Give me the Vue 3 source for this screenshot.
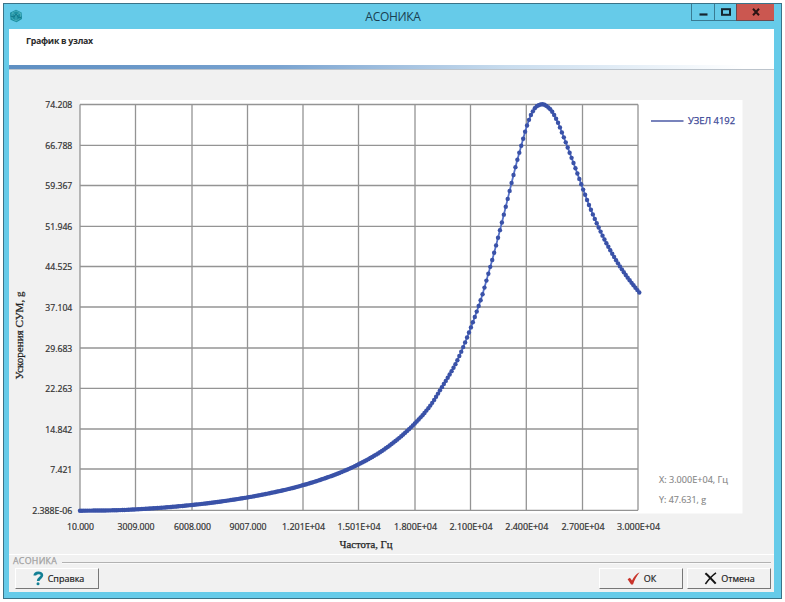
<script setup>
const xTicks = [
  { x: 80, label: '10.000', w: 27 },
  { x: 135.5, label: '3009.000', w: 37 },
  { x: 192, label: '6008.000', w: 37 },
  { x: 247.5, label: '9007.000', w: 37 },
  { x: 303, label: '1.201E+04', w: 43 },
  { x: 358.5, label: '1.501E+04', w: 43 },
  { x: 415, label: '1.800E+04', w: 43 },
  { x: 470.5, label: '2.100E+04', w: 43 },
  { x: 526.3, label: '2.400E+04', w: 43 },
  { x: 582.5, label: '2.700E+04', w: 43 },
  { x: 638, label: '3.000E+04', w: 43 },
]
const yTicks = [
  { y: 104.5, label: '74.208', w: 27 },
  { y: 145.3, label: '66.788', w: 27 },
  { y: 185.5, label: '59.367', w: 27 },
  { y: 226.3, label: '51.946', w: 27 },
  { y: 266.5, label: '44.525', w: 27 },
  { y: 307, label: '37.104', w: 27 },
  { y: 348, label: '29.683', w: 27 },
  { y: 388.3, label: '22.263', w: 27 },
  { y: 429, label: '14.842', w: 27 },
  { y: 469, label: '7.421', w: 22 },
  { y: 510.3, label: '2.388E-06', w: 40 },
]

const samples = [
  [80, 510.7], [114, 510.3], [135, 509.4], [163, 507.6], [192, 505], [220, 501.6],
  [247, 497.5], [280, 491], [303, 485.2], [330, 476.5], [345, 470.6], [360, 463.6],
  [380, 452.2], [396.7, 440], [415, 423.3], [430, 406], [441.7, 387.5], [455, 365],
  [460, 354.5], [465, 342.7], [470.7, 328], [476.7, 311.7], [482.3, 295], [487.7, 276],
  [493.7, 254.5], [501, 226], [506.7, 203], [510.7, 186.5], [516, 165], [522, 143],
  [526.7, 126.5], [531.7, 113.5], [536.7, 106.3], [542.5, 104.3], [550, 109], [556.7, 120],
  [563.3, 136], [569, 151], [576.7, 171.7], [582.7, 188.3], [590, 207.5], [598.3, 226.7],
  [606.7, 243.8], [620, 266.5], [630, 280.8], [639.3, 292.5],
]

// Monotone cubic interpolation between the samples
const n = samples.length
const d = []
for (let i = 0; i < n - 1; i++) {
  d.push((samples[i + 1][1] - samples[i][1]) / (samples[i + 1][0] - samples[i][0]))
}
const m = samples.map((_, i) => {
  if (i === 0) return d[0]
  if (i === n - 1) return d[n - 2]
  return d[i - 1] * d[i] <= 0 ? 0 : (2 * d[i - 1] * d[i]) / (d[i - 1] + d[i])
})
function valueAt(x) {
  let i = 0
  while (i < n - 2 && x > samples[i + 1][0]) i++
  const [x0, y0] = samples[i]
  const [x1, y1] = samples[i + 1]
  const h = x1 - x0
  const t = (x - x0) / h
  const t2 = t * t
  const t3 = t2 * t
  return (2 * t3 - 3 * t2 + 1) * y0 + (t3 - 2 * t2 + t) * h * m[i] +
    (3 * t2 - 2 * t3) * y1 + (t3 - t2) * h * m[i + 1]
}
const COUNT = 290
const points = Array.from({ length: COUNT }, (_, i) => {
  const x = 80 + (559.3 * i) / (COUNT - 1)
  return { x: +x.toFixed(2), y: +valueAt(x).toFixed(2) }
})
const line = points.map((p) => `${p.x},${p.y}`).join(' ')
</script>

<template>
  <div class="desktop">
    <div class="window">
      <header class="titlebar">
        <svg class="app-icon" width="14" height="14" viewBox="0 0 14 14">
          <path d="M7 .8 12.6 3.6 13 10 7.5 13.3 1.5 10.8 1 3.8Z" fill="#1c8fa2" />
          <path d="M3 4 7 6 11.5 4M7 6v6M3 4v5.5l4 2.5 4.5-3V4L7 2Z" fill="none" stroke="#4fb2bd" stroke-width=".8" />
          <path d="M1.5 7 5 8 7 5l3 4 2.5-1" fill="none" stroke="#13788a" stroke-width="1" />
        </svg>
        <h1 class="title">АСОНИКА</h1>
        <div class="controls">
          <span class="ctl min"><svg width="9" height="9" viewBox="0 0 9 9"><path d="M.5 6.5h8" stroke="#16262f" stroke-width="2.2" /></svg></span>
          <span class="ctl max"><svg width="10" height="8" viewBox="0 0 10 8"><rect x="1" y="1.2" width="8" height="5.6" fill="none" stroke="#16262f" stroke-width="2" /></svg></span>
          <span class="ctl close"><svg width="8" height="8" viewBox="0 0 8 8"><path d="M1 .8 7 7.2M7 .8 1 7.2" stroke="#2c1414" stroke-width="2" /></svg></span>
        </div>
      </header>

      <main class="client">
        <div class="banner"><h2>График в узлах</h2></div>
        <div class="rule"></div>

        <svg class="chart" width="765" height="484" viewBox="9 70 765 484">
          <rect x="80" y="100" width="662.5" height="413.5" fill="#fff" />
          <g stroke="#949494" stroke-width="1.3">
            <line v-for="t in xTicks" :key="t.label" :x1="t.x" :x2="t.x" y1="104.5" y2="510.3" />
            <line v-for="t in yTicks" :key="t.label" x1="80" x2="638" :y1="t.y" :y2="t.y" />
          </g>
          <polyline :points="line" fill="none" stroke="#5470c8" stroke-width="1.8" />
          <g fill="#3a52a8">
            <circle v-for="(p, i) in points" :key="i" :cx="p.x" :cy="p.y" r="2.2" />
          </g>
          <g class="tick">
            <text v-for="t in yTicks" :key="t.label" :x="72.3 - t.w" :y="t.y + 3.9" :textLength="t.w" lengthAdjust="spacingAndGlyphs">{{ t.label }}</text>
            <text v-for="t in xTicks" :key="t.label" :x="t.x + 0.5 - t.w / 2" y="530" :textLength="t.w" lengthAdjust="spacingAndGlyphs">{{ t.label }}</text>
          </g>
          <text class="axis" x="339.5" y="548" textLength="53" lengthAdjust="spacingAndGlyphs">Частота, Гц</text>
          <text class="axis" transform="translate(23 379.5) rotate(-90)" textLength="88" lengthAdjust="spacingAndGlyphs">Ускорения СУМ, g</text>
          <line x1="651" x2="683.5" y1="121" y2="121" stroke="#4b5aa6" stroke-width="1.7" />
          <text class="legend" x="688" y="124" textLength="47" lengthAdjust="spacingAndGlyphs">УЗЕЛ 4192</text>
          <text class="coord" x="659" y="482.5" textLength="69" lengthAdjust="spacingAndGlyphs">X: 3.000E+04, Гц</text>
          <text class="coord" x="659" y="503" textLength="47" lengthAdjust="spacingAndGlyphs">Y: 47.631, g</text>
        </svg>

        <footer class="footer">
          <div class="group"><span class="group-name">АСОНИКА</span><i class="group-line"></i></div>
          <div class="buttons">
            <button class="btn help">
              <svg width="11" height="15" viewBox="0 0 11 15">
                <path d="M1.8 4.6C1.8 1.2 8.9.8 8.9 4.3 8.9 6.8 5.3 6.9 5.2 10" fill="none" stroke="#137f94" stroke-width="2.7" />
                <circle cx="5" cy="12.8" r="1.5" fill="#137f94" />
              </svg>
              <span class="help-text">Справка</span>
            </button>
            <button class="btn ok">
              <svg width="13" height="13" viewBox="0 0 13 13">
                <path d="M.6 7.2 2.9 5.8 5 8.6C6.7 5.1 8.9 2.2 12.6.3 9.6 4.2 7.4 8.3 6 12.4H4.1Z" fill="#c9342b" />
              </svg>
              <span class="ok-text">ОК</span>
            </button>
            <button class="btn cancel">
              <svg width="13" height="13" viewBox="0 0 13 13">
                <path d="M1.4 1.2C5 4.3 8.4 8 11.7 11.6" fill="none" stroke="#151515" stroke-width="2.1" />
                <path d="M12 .8C7.8 3.7 4.3 7.8 1.4 12" fill="none" stroke="#151515" stroke-width="1.5" />
              </svg>
              <span class="cancel-text">Отмена</span>
            </button>
          </div>
        </footer>
      </main>
    </div>
  </div>
</template>

<style>
body {
  margin: 0;
  background: #fff;
}
</style>

<style scoped>
.desktop {
  box-sizing: border-box;
  width: 785px;
  height: 602px;
  padding: 3px;
  background: #fff;
  overflow: hidden;
  font-family: "Open Sans", "Noto Sans", sans-serif;
}
.window {
  box-sizing: border-box;
  width: 779px;
  height: 596px;
  border: 1px solid #3a7388;
  background: #66cbe9;
  padding: 0 7px 6px 5px;
}
.titlebar {
  display: grid;
  grid-template-columns: 100px 1fr 100px;
  height: 25px;
}
.app-icon {
  margin: 5px 0 0 0;
}
.title {
  margin: 4px 0 0 3px;
  font-size: 12px;
  font-weight: 400;
  line-height: 17px;
  letter-spacing: -0.3px;
  text-align: center;
  color: #193f52;
}
.controls {
  display: flex;
  justify-content: flex-end;
  height: 17px;
}
.ctl {
  box-sizing: border-box;
  display: flex;
  align-items: center;
  justify-content: center;
  height: 17px;
  border: 1px solid #397b93;
  border-top: 0;
  border-right: 0;
}
.min {
  width: 23px;
}
.max {
  width: 22px;
}
.close {
  width: 38px;
  background: #cb5750;
  border-color: #6b4a50;
}
.client {
  display: flex;
  flex-direction: column;
  height: 563px;
  background: #f1f1f1;
}
.banner {
  flex: none;
  height: 36px;
  background: #fff;
}
.banner h2 {
  margin: 0;
  padding: 5px 0 0 17px;
  font-size: 8.8px;
  line-height: 14px;
  font-weight: 700;
  letter-spacing: -0.28px;
  color: #2a2a2a;
}
.rule {
  flex: none;
  box-sizing: border-box;
  height: 5px;
  border-bottom: 1px solid #bcc4cc;
  background: linear-gradient(90deg, #5e8fc2 0%, #79a3d0 35%, #c8dcee 65%, #fff 96%);
}
.chart {
  flex: none;
  display: block;
}
.tick {
  font-size: 8.6px;
  fill: #333;
  stroke: #333;
  stroke-width: 0.22px;
}
.axis {
  font-family: "Liberation Serif", serif;
  font-size: 10.5px;
  fill: #222;
  stroke: #222;
  stroke-width: 0.25px;
}
.legend {
  font-size: 9.8px;
  fill: #3b4796;
  stroke: #3b4796;
  stroke-width: 0.25px;
}
.coord {
  font-size: 8.8px;
  fill: #858585;
  stroke: #858585;
  stroke-width: 0.12px;
}
.footer {
  flex: 1;
  border-top: 1px solid #fff;
}
.group {
  display: flex;
  align-items: center;
  height: 12px;
  padding: 0 3px 0 4px;
  gap: 5px;
}
.group-name {
  font-size: 8.8px;
  line-height: 12px;
  letter-spacing: 0.3px;
  color: #a0a0a0;
  -webkit-text-stroke: 0.25px #a0a0a0;
}
.group-line {
  flex: 1;
  height: 1px;
  margin-top: 4px;
  background: #b2b2b2;
  border-bottom: 1px solid #fafafa;
}
.buttons {
  display: flex;
  padding: 1px 3px 0 6px;
}
.btn {
  box-sizing: border-box;
  display: flex;
  align-items: center;
  justify-content: center;
  width: 84px;
  height: 21px;
  padding: 0 0 0 1px;
  border: 1px solid #fff;
  border-right: 1.5px solid #777;
  border-bottom: 1.5px solid #777;
  background: #f1f1f1;
  font-family: inherit;
  font-size: 9px;
  line-height: 14px;
  color: #222;
  gap: 4px;
  -webkit-text-stroke: 0.2px #222;
}
.help {
  padding-left: 3px;
}
.ok {
  margin-left: auto;
  margin-right: 4px;
}
</style>
